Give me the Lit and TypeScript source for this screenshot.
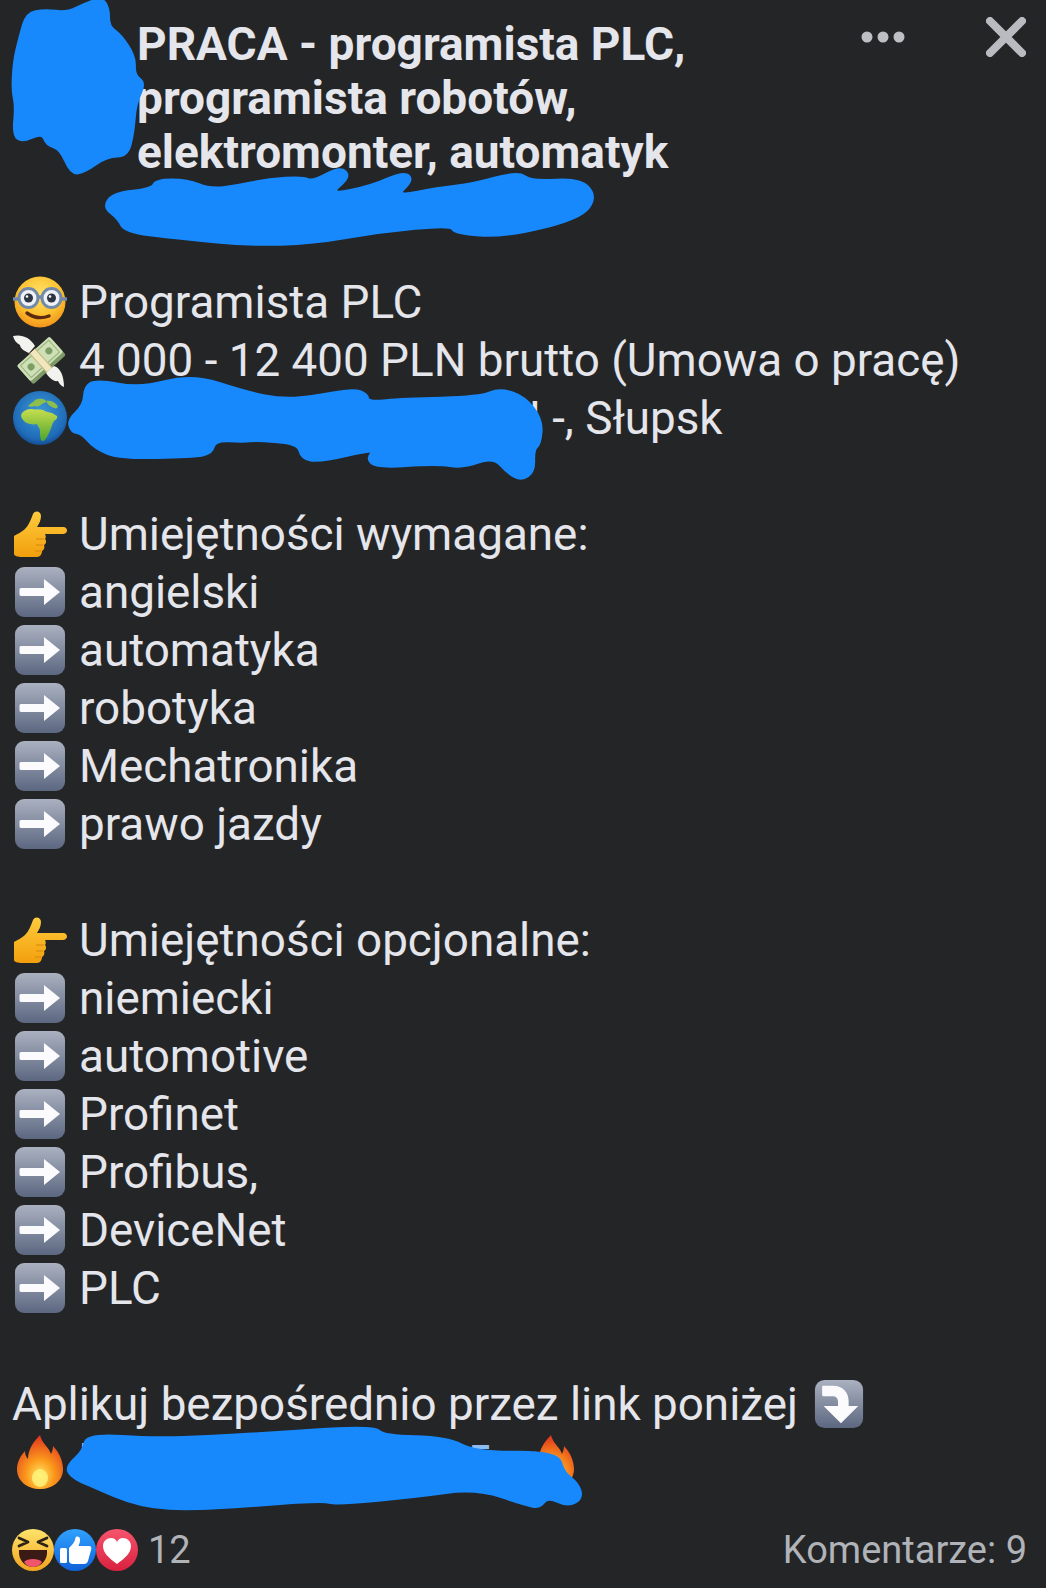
import { LitElement, html, css } from "lit";
import { customElement } from "lit/decorators.js";

type P = [number, number];
const smooth = (pts: P[], sx: number, sy: number, ox: number, oy: number) => {
  const q = pts.map(([x, y]): P => [x / sx + ox, y / sy + oy]);
  const mid = (a: P, b: P): P => [(a[0] + b[0]) / 2, (a[1] + b[1]) / 2];
  const f = (p: P) => `${p[0].toFixed(1)} ${p[1].toFixed(1)}`;
  let d = `M${f(mid(q[q.length - 1], q[0]))}`;
  q.forEach((p, i) => {
    d += `Q${f(p)} ${f(mid(p, q[(i + 1) % q.length]))}`;
  });
  return d + "Z";
};

const blobs = [
  smooth([[32,180],[45,110],[60,40],[100,30],[150,38],[190,12],[228,-6],[243,25],[243,80],[270,105],[302,170],[300,225],[325,250],[303,310],[298,400],[285,468],[240,468],[190,515],[160,522],[135,445],[105,435],[95,398],[50,425],[30,405],[36,320],[28,270]], 2.24, 3, 0, 0),
  smooth([[232,620],[255,580],[340,568],[350,540],[420,540],[470,568],[530,558],[600,538],[680,532],[700,545],[762,500],[785,530],[735,585],[830,560],[905,515],[925,540],[885,590],[980,565],[1060,553],[1160,515],[1190,545],[1300,536],[1336,590],[1300,655],[1130,710],[1020,700],[1010,675],[850,695],[700,730],[560,735],[400,715],[280,695],[265,655]], 2.24, 3, 0, 0),
  smooth([[25,180],[72,135],[75,80],[110,60],[240,85],[395,44],[560,97],[660,117],[750,112],[880,88],[920,102],[925,127],[1030,117],[1260,112],[1320,86],[1395,112],[1446,180],[1440,252],[1420,268],[1422,335],[1385,360],[1345,340],[1300,290],[1210,323],[1130,310],[950,323],[920,295],[950,265],[780,305],[725,295],[715,250],[590,240],[550,245],[465,240],[455,280],[400,290],[180,295],[105,265],[66,220],[35,215]], 3, 3, 60, 360),
  smooth([[168,320],[212,272],[220,222],[400,237],[650,222],[945,198],[970,228],[1130,232],[1205,278],[1410,276],[1425,338],[1462,372],[1472,415],[1436,438],[1385,410],[1365,442],[1330,435],[1205,385],[1050,410],[850,433],[815,420],[500,450],[355,440],[225,375],[180,350]], 2.529, 3, 0, 1360),
];

const nerd = html`<svg class="ic" viewBox="0 0 54 54">
  <defs><radialGradient id="ny" cx=".5" cy=".35" r=".7"><stop offset="0" stop-color="#ffe36b"/><stop offset=".6" stop-color="#fcc02e"/><stop offset="1" stop-color="#f08a17"/></radialGradient></defs>
  <circle cx="27" cy="27" r="25.500" fill="url(#ny)"/>
  <path d="M14 38c7 5 14 6 22 3" fill="none" stroke="#5c2a10" stroke-width="3.400" stroke-linecap="round"/>
  <path d="M0 24h8M46 24h8M23 22h8" stroke="#7389a8" stroke-width="3.400" stroke-linecap="round"/>
  <circle cx="15.500" cy="23" r="9.500" fill="#eef1f6" stroke="#7389a8" stroke-width="3"/>
  <circle cx="38.500" cy="23" r="9.500" fill="#eef1f6" stroke="#7389a8" stroke-width="3"/>
  <circle cx="15.500" cy="23" r="4.500" fill="#2d3340"/><circle cx="38.500" cy="23" r="4.500" fill="#2d3340"/>
  <circle cx="14" cy="21.500" r="1.300" fill="#fff"/><circle cx="37" cy="21.500" r="1.300" fill="#fff"/>
</svg>`;

const money = html`<svg class="ic" viewBox="0 0 54 54">
  <path d="M0 3c8-2 17 1 22 10l-6 7c-5-2-9-5-9-8C3 10 1 7 0 3z" fill="#f2f2ef"/>
  <path d="M32 38l9-5c7 2 10 11 10 21-3-1-5-4-6-6-5 1-10-4-13-10z" fill="#f2f2ef"/>
  <g transform="rotate(-42 28 27)">
    <rect x="6" y="18" width="44" height="22" rx="2" fill="#7d9a68"/>
    <rect x="6" y="15" width="44" height="21" rx="2" fill="#cfe0b6"/>
    <rect x="9" y="17.500" width="38" height="16" fill="none" stroke="#95b27d" stroke-width="1"/>
    <circle cx="16" cy="25.500" r="3.500" fill="#7c9e64"/><circle cx="40" cy="25.500" r="3.500" fill="#7c9e64"/>
    <rect x="24" y="14.500" width="7" height="25.500" fill="#f1e7bf"/>
    <path d="M24 14.500v25.500M31 14.500v25.500" stroke="#c9b77e" stroke-width="1"/>
  </g>
</svg>`;

const globe = html`<svg class="ic" viewBox="0 0 54 54">
  <defs><radialGradient id="gb" cx=".5" cy=".4" r=".65"><stop offset="0" stop-color="#3d9ad6"/><stop offset=".75" stop-color="#1f6bb8"/><stop offset="1" stop-color="#123f86"/></radialGradient>
  <linearGradient id="gg" x1="0" y1="0" x2="0" y2="1"><stop offset="0" stop-color="#c6de4e"/><stop offset="1" stop-color="#4fa52e"/></linearGradient></defs>
  <circle cx="27" cy="27" r="27" fill="url(#gb)"/>
  <path d="M8 24c2-5 7-6 11-6 4 1 7 0 11 1 3 2 6 2 9 3l5 3c1 2-1 4-3 5-2 3-3 8-5 12-2 4-4 8-6 8-3 0-3-6-3-10 0-3-2-4-3-7-4 1-9 0-12-2-2-2-4-4-4-7z" fill="url(#gg)"/>
  <path d="M15 15c2-3 5-3 7-6 3-1 6-2 10 0 3 2-1 3-3 4-2 2-5 3-7 2-2 1-5 1-7 0zM33 10c3-1 8 0 11 4 2 3-1 4-3 3-3-1-6-3-8-7z" fill="#8dbf4f"/>
</svg>`;

const hand = html`<svg class="ic" viewBox="0 0 54 54">
  <defs><linearGradient id="hy" x1="0" y1="0" x2="0" y2="1"><stop offset="0" stop-color="#ffcb3d"/><stop offset="1" stop-color="#f29f0c"/></linearGradient></defs>
  <path d="M1 29c3-2 8-4 11-7 4-4 6-10 8-15 2-4 8-3 8 2 0 4-2 8-4 11h26c3 0 4 2 4 3.500 0 2-2 3.500-4 3.500H32c1 2 1 4 0 5 2 2 1 5-1 6 1 2 0 5-2 6 0 3-2 6-5 6H9c-4 0-8-1-8-3z" fill="url(#hy)"/>
  <path d="M23 32h8M23 38h7M22 44h6" stroke="#d9860a" stroke-width="1.200" fill="none"/>
</svg>`;

const arrow = html`<svg class="ic" viewBox="0 0 54 54">
  <defs><linearGradient id="ab" x1="0" y1="0" x2="0" y2="1"><stop offset="0" stop-color="#aab1c0"/><stop offset="1" stop-color="#5c6780"/></linearGradient></defs>
  <rect x="2" y="2" width="50" height="50" rx="9" fill="url(#ab)"/>
  <path d="M8 23h23v-9l16 13-16 13v-9H8c-1 0-1.500-1-1.500-1.500v-5C6.500 24 7 23 8 23z" fill="#fbfbfd"/>
</svg>`;

const curved = html`<svg class="ic" viewBox="0 0 54 54">
  <defs><linearGradient id="cb" x1="0" y1="0" x2="0" y2="1"><stop offset="0" stop-color="#aab1c0"/><stop offset="1" stop-color="#5c6780"/></linearGradient></defs>
  <rect x="2" y="2" width="50" height="50" rx="10" fill="url(#cb)"/>
  <path d="M10 8h11c10 0 16 7 16 16v5h10L29 47 11 29h15v-4c0-4-2-6-6-6h-9c-1 0-1.500-.5-1.500-1.500v-8C9.500 8.500 10 8 10 8z" fill="#fbfbfd"/>
</svg>`;

const fire = html`<svg class="ic" viewBox="0 0 54 54">
  <defs><radialGradient id="ff" cx=".5" cy=".75" r=".75"><stop offset="0" stop-color="#ffe766"/><stop offset=".4" stop-color="#fb9a1c"/><stop offset="1" stop-color="#e0301e"/></radialGradient></defs>
  <path d="M27 0c2 9 9 12 11 19 1-2 2-5 2-8 6 6 10 15 10 23 0 12-10 20-23 20S4 46 4 34c0-7 4-14 8-18 0 3 1 6 3 8 0-9 5-17 12-24z" fill="url(#ff)"/>
  <ellipse cx="27" cy="43" rx="8" ry="9" fill="#fff27a" opacity=".85"/>
</svg>`;

const laugh = html`<svg class="rx" viewBox="0 0 44 44">
  <defs><linearGradient id="ly" x1="0" y1="0" x2="0" y2="1"><stop offset="0" stop-color="#ffe36b"/><stop offset="1" stop-color="#f2a31e"/></linearGradient></defs>
  <circle cx="22" cy="22" r="21" fill="url(#ly)"/>
  <path d="M8 10l9 4-9 4M36 10l-9 4 9 4" fill="none" stroke="#2b2316" stroke-width="2.800" stroke-linecap="round" stroke-linejoin="round"/>
  <path d="M8 22h28c1 10-6 17-14 17S7 32 8 22z" fill="#3a1a14"/>
  <path d="M13 34c3-4 15-4 18 0-2 3-5 5-9 5s-7-2-9-5z" fill="#f0566b"/>
</svg>`;

const like = html`<svg class="rx" viewBox="0 0 44 44">
  <defs><linearGradient id="lb" x1="0" y1="0" x2="0" y2="1"><stop offset="0" stop-color="#30a2ff"/><stop offset="1" stop-color="#0f62d8"/></linearGradient></defs>
  <circle cx="22" cy="22" r="21" fill="url(#lb)"/>
  <rect x="7" y="20" width="7" height="15" rx="1.500" fill="#fff"/>
  <path d="M16 20c3-3 6-6 6.500-10 .3-2 4-2 4.500 1 .4 3-1 5-1.500 7H36c2 0 3 2 2 4l-3 11c-.5 2-2 3-4 3H20c-2 0-4-1-4-3z" fill="#fff"/>
</svg>`;

const heart = html`<svg class="rx" viewBox="0 0 44 44">
  <defs><linearGradient id="hr" x1="0" y1="0" x2="0" y2="1"><stop offset="0" stop-color="#f7546e"/><stop offset="1" stop-color="#d8213f"/></linearGradient></defs>
  <circle cx="22" cy="22" r="21" fill="url(#hr)"/>
  <path d="M22 36C14 30 8 25 8 18c0-5 4-8 8-8 3 0 5 1.500 6 4 1-2.500 3-4 6-4 4 0 8 3 8 8 0 7-6 12-14 18z" fill="#fff"/>
</svg>`;

const skills1 = ["angielski", "automatyka", "robotyka", "Mechatronika", "prawo jazdy"];
const skills2 = ["niemiecki", "automotive", "Profinet", "Profibus,", "DeviceNet", "PLC"];

@customElement("app-root")
export class AppRoot extends LitElement {
  static styles = css`
    :host {
      display: block;
      position: relative;
      width: 1046px;
      height: 1588px;
      overflow: hidden;
      background: #242527;
      color: #e4e6eb;
      font-family: Roboto, "Liberation Sans", sans-serif;
    }
    .head {
      display: flex;
      justify-content: space-between;
      padding: 17px 20px 0 137px;
    }
    .title {
      font-size: 46px;
      font-weight: 700;
      line-height: 54px;
      white-space: nowrap;
    }
    .actions {
      display: flex;
      align-items: flex-start;
      gap: 81px;
      height: 44px;
    }
    .dots { width: 44px; height: 12px; margin-top: 14px; }
    .close { width: 40px; height: 40px; }
    .body { margin-top: 94px; padding-left: 13px; }
    .row {
      display: flex;
      align-items: center;
      gap: 12px;
      height: 58px;
      font-size: 45.8px;
      white-space: nowrap;
    }
    .ic { width: 54px; height: 54px; flex: none; }
    .gap { height: 58px; }
    .plain { margin-left: -1px; gap: 15px; }
    .plain .ic { width: 52px; height: 52px; }
    .loc { padding-left: 450px; }
    .link { color: #8dbcf2; }
    .ht { width: 375px; }
    .five { width: 46px; }
    .foot {
      display: flex;
      justify-content: space-between;
      align-items: center;
      height: 44px;
      margin-top: 37px;
      padding: 0 19px 0 11px;
      color: #b0b3b8;
      font-size: 38px;
    }
    .likes { display: flex; align-items: center; }
    .rx { width: 44px; height: 44px; margin-right: -2px; flex: none; }
    .count { margin-left: 11px; }
    .ink {
      position: absolute;
      inset: 0;
      width: 1046px;
      height: 1588px;
      pointer-events: none;
    }
    .ink path { fill: #1789fc; stroke: #1789fc; stroke-width: 3px; stroke-linejoin: round; }
  `;

  render() {
    return html`
      <header class="head">
        <div class="title">PRACA - programista PLC,<br />programista robotów,<br />elektromonter, automatyk</div>
        <div class="actions">
          <svg class="dots" viewBox="0 0 44 12"><g fill="#bcc0c4"><circle cx="6" cy="6" r="5.500"/><circle cx="22" cy="6" r="5.500"/><circle cx="38" cy="6" r="5.500"/></g></svg>
          <svg class="close" viewBox="0 0 40 40"><path d="M4 4l32 32M36 4L4 36" stroke="#b8bbbf" stroke-width="8" stroke-linecap="round"/></svg>
        </div>
      </header>
      <main class="body">
        <div class="row">${nerd}<span>Programista PLC</span></div>
        <div class="row">${money}<span>4 000 - 12 400 PLN brutto (Umowa o pracę)</span></div>
        <div class="row">${globe}<span class="loc">! -, Słupsk</span></div>
        <div class="gap"></div>
        <div class="row">${hand}<span>Umiejętności wymagane:</span></div>
        ${skills1.map((s) => html`<div class="row">${arrow}<span>${s}</span></div>`)}
        <div class="gap"></div>
        <div class="row">${hand}<span>Umiejętności opcjonalne:</span></div>
        ${skills2.map((s) => html`<div class="row">${arrow}<span>${s}</span></div>`)}
        <div class="gap"></div>
        <div class="row plain"><span>Aplikuj bezpośrednio przez link poniżej</span>${curved}</div>
        <div class="row link">${fire}<span class="ht">ht</span><span class="five">5</span>${fire}</div>
      </main>
      <footer class="foot">
        <div class="likes">${laugh}${like}${heart}<span class="count">12</span></div>
        <div>Komentarze: 9</div>
      </footer>
      <svg class="ink" viewBox="0 0 1046 1588">
        ${blobs.map((d) => html`<svg><path d=${d}></path></svg>`)}
      </svg>
    `;
  }
}
